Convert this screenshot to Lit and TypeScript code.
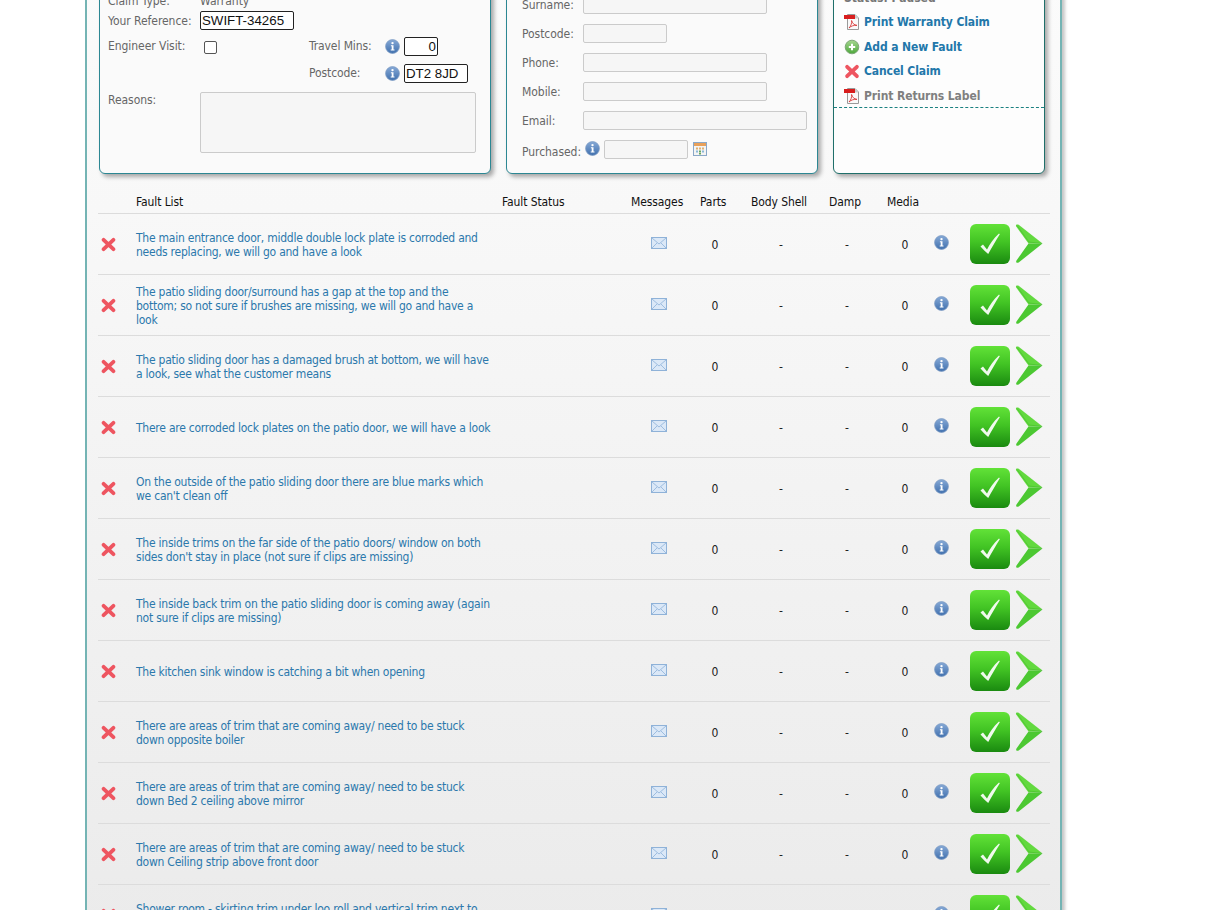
import { LitElement, css, html, svg } from 'lit'
import { customElement } from 'lit/decorators.js'

const FAULTS = [
  ['The main entrance door, middle double lock plate is corroded and', 'needs replacing, we will go and have a look'],
  ['The patio sliding door/surround has a gap at the top and the', 'bottom; so not sure if brushes are missing, we will go and have a', 'look'],
  ['The patio sliding door has a damaged brush at bottom, we will have', 'a look, see what the customer means'],
  ['There are corroded lock plates on the patio door, we will have a look'],
  ['On the outside of the patio sliding door there are blue marks which', "we can't clean off"],
  ['The inside trims on the far side of the patio doors/ window on both', "sides don't stay in place (not sure if clips are missing)"],
  ['The inside back trim on the patio sliding door is coming away (again', 'not sure if clips are missing)'],
  ['The kitchen sink window is catching a bit when opening'],
  ['There are areas of trim that are coming away/ need to be stuck', 'down opposite boiler'],
  ['There are areas of trim that are coming away/ need to be stuck', 'down Bed 2 ceiling above mirror'],
  ['There are areas of trim that are coming away/ need to be stuck', 'down Ceiling strip above front door'],
  ['Shower room - skirting trim under loo roll and vertical trim next to', 'shower'],
]

const infoIcon = () => svg`<svg class="info" viewBox="0 0 15 15" width="15" height="15">
  <defs><linearGradient id="ib" x1="0" y1="0" x2="0" y2="1"><stop offset="0" stop-color="#86a9d6"/><stop offset="1" stop-color="#4070ae"/></linearGradient></defs>
  <circle cx="7.5" cy="7.5" r="6.9" fill="url(#ib)" stroke="#7d9cc4" stroke-width=".8"/>
  <circle cx="7.5" cy="4.1" r="1.2" fill="#fff"/>
  <path d="M5.9 6.2h2.6v4.2h1v1.1H5.7v-1.1h1V7.3h-.8z" fill="#fff"/>
</svg>`

const crossIcon = () => svg`<svg viewBox="0 0 15 15" width="15" height="15">
  <path d="M2.6 2.8 12.4 12.2M12.4 2.8 2.6 12.2" stroke="#ee5560" stroke-width="3.8" stroke-linecap="round" fill="none"/>
</svg>`

const mailIcon = () => svg`<svg viewBox="0 0 16 12" width="16" height="12">
  <rect x=".5" y=".5" width="15" height="11" fill="#dbe8f7" stroke="#8fb2d8"/>
  <path d="M1 1l7 6 7-6M1 11l5-5M15 11l-5-5" fill="none" stroke="#9dbde0"/>
</svg>`

const pdfIcon = () => svg`<svg viewBox="0 0 16 16" width="16" height="16">
  <path d="M3.5 .5H11l3.5 3.5v11.5h-11z" fill="#fafafa" stroke="#9a9a9a"/>
  <path d="M0 1h11v4H0z" fill="#d81e1e"/>
  <path d="M11 1l3.5 3.5H11z" fill="#c9c9c9"/>
  <path d="M5 14c2-2 3-5 2.6-7.5C8.2 9 10 11 13 11.400 10 11 7 12 5 14z" fill="none" stroke="#d83a3a" stroke-width=".9"/>
</svg>`

const plusIcon = () => svg`<svg viewBox="0 0 16 16" width="16" height="16">
  <defs><linearGradient id="pg" x1="0" y1="0" x2="0" y2="1"><stop offset="0" stop-color="#a5d68f"/><stop offset="1" stop-color="#4ea83c"/></linearGradient></defs>
  <circle cx="8" cy="8" r="6.800" fill="url(#pg)" stroke="#7fa878"/>
  <path d="M8 4.800v6.400M4.800 8h6.400" stroke="#fff" stroke-width="2"/>
</svg>`

const calendarIcon = () => svg`<svg viewBox="0 0 14 14" width="14" height="14">
  <rect x=".5" y=".5" width="13" height="13" fill="#f4f4f4" stroke="#8aa8c8"/>
  <rect x="1" y="1" width="12" height="3" fill="#e8a05a"/>
  <path d="M3 5.500h2v2H3zM6 5.500h2v2H6zM9 5.500h2v2H9z" fill="#e0b070"/>
  <path d="M3 8.500h2v2H3zM9 8.500h2v2H9z" fill="#8ab8d8"/>
  <path d="M6 8.500h2v2H6zM6 11h2v1.500H6z" fill="#6aa860"/>
</svg>`

const arrowIcon = () => svg`<svg viewBox="0 0 28 40" width="28" height="40">
  <path d="M2.300 .5C1 .5.600 1.500 1.200 2.500L13.500 19.500H27.500L4 1C3.400.6 2.900.5 2.300.5z" fill="#62d93e"/>
  <path d="M13.500 19.500 1.500 36.500C.7 37.800 1.300 39 2.700 38.800 3.500 38.700 4 38.300 4.600 37.800L27.500 19.500z" fill="#4cc832"/>
  <path d="M2 1.500 14 18 27 19.500" fill="none" stroke="#3fb02a" stroke-width=".8" stroke-opacity=".6"/>
</svg>`

const tickIcon = () => svg`<svg viewBox="0 0 40 40" width="40" height="40">
  <path d="M10.500 22.500 13 20.500 17 25.500C20 19.500 23.500 14.500 29 9.500L29.800 10.300C25.500 17 22 23.500 18.200 30 15.500 28 13 25 10.500 22.500z" fill="#fff" fill-opacity=".92"/>
</svg>`

@customElement('app-root')
export class AppRoot extends LitElement {
  static styles = css`
    :host {
      display: block;
      height: 910px;
      overflow: hidden;
      background: #fff;
      font-family: 'DejaVu Sans', sans-serif;
      font-stretch: condensed;
      font-size: 12px;
      color: #666;
    }

    .panel {
      box-sizing: border-box;
      width: 977px;
      height: 960px;
      margin: -30px 0 0 85px;
      padding: 10px 0 0 12px;
      border: solid #74b4b4;
      border-width: 0 2px;
      background: linear-gradient(#fbfbfb, #f8f8f8 25%, #ebebeb 100%);
      box-shadow: 3px 0 3px #c8c8c8;
    }

    .cards {
      display: flex;
      gap: 15px;
      height: 194px;
    }

    .card {
      box-sizing: border-box;
      height: 194px;
      border: 1px solid #2c8793;
      border-radius: 6px;
      background: #fafafa;
      box-shadow: 3px 3px 4px #a9a9a9;
    }

    .claim {
      width: 392px;
      padding: 12px 0 0 8px;
    }

    .customer {
      width: 312px;
      padding: 0 0 0 15px;
    }

    .actions {
      width: 212px;
      border-color: #1f6f6a;
      background: #fdfdfd;
    }

    .line {
      display: flex;
      align-items: center;
    }

    .l1 {
      width: 92px;
      flex: none;
      letter-spacing: -0.05px;
    }

    .l2 {
      width: 76px;
      flex: none;
      letter-spacing: -0.1px;
    }

    .input {
      box-sizing: border-box;
      height: 19px;
      border: 1px solid #222;
      border-radius: 2px;
      background: #fff;
      color: #111;
      font: 13.3px/17px 'Liberation Sans', sans-serif;
      padding: 0 1px;
    }

    .input.num {
      text-align: right;
    }

    .off {
      box-sizing: border-box;
      height: 19px;
      border: 1px solid #cbcbcb;
      border-radius: 2px;
      background: #f6f6f6;
    }

    .claim-type {
      height: 15px;
      margin-bottom: 3px;
    }

    .ref {
      height: 19px;
      margin-bottom: 7px;
    }

    .visit {
      height: 19px;
      margin-bottom: 8px;
    }

    .visit > span:first-child,
    .mins {
      margin-top: -2px;
    }

    .pc {
      height: 19px;
      margin-bottom: 9px;
      padding-left: 201px;
    }

    .pc .l2 {
      margin-top: -2px;
    }

    .check {
      box-sizing: border-box;
      width: 13px;
      height: 13px;
      margin: 2px 0 0 4px;
      border: 1px solid #555;
      border-radius: 2px;
      background: #fff;
      flex: none;
    }

    .visit .mins {
      margin-left: 92px;
      width: 76px;
      flex: none;
      letter-spacing: -0.1px;
    }

    .visit .info,
    .pc .info {
      margin-right: 4px;
      flex: none;
    }

    .reasons {
      align-items: flex-start;
    }

    .reasons .off {
      width: 276px;
      height: 61px;
    }

    .reasons .l1 {
      margin-top: 1px;
    }

    .field {
      display: flex;
      align-items: center;
      height: 19px;
      margin-bottom: 10px;
    }

    .field .name {
      width: 61px;
      flex: none;
      letter-spacing: -0.05px;
    }

    .customer .field:first-child {
      margin-top: 14px;
    }

    .purchased {
      margin: 0;
    }

    .purchased .name {
      width: auto;
      margin: 4px 4px 0 0;
    }

    .purchased .off {
      margin: 0 5px 0 4px;
    }

    .purchased .info {
      margin-bottom: 2px;
    }

    .purchased svg:last-child {
      margin-bottom: 1px;
    }

    .status {
      padding: 10px 0 0 10px;
      height: 15px;
      font-weight: 700;
      color: #777;
    }

    .links {
      display: flex;
      flex-direction: column;
      height: 102px;
      padding: 4px 0 0 10px;
      box-sizing: border-box;
      border-bottom: 1px dashed #1a8080;
    }

    .link {
      display: flex;
      align-items: center;
      gap: 4px;
      height: 24.500px;
      font-weight: 700;
      letter-spacing: -0.1px;
      color: #2277aa;
      flex: none;
    }

    .link svg {
      width: 16px;
    }

    .link.grey {
      color: #808080;
    }

    .table {
      width: 952px;
      margin: 15px 0 0 -1px;
    }

    .row {
      display: grid;
      grid-template-columns: 38px 366px 128px 56px 58px 74px 58px 58px 16px 1fr;
      align-items: center;
      height: 61px;
      border-top: 1px solid #dcdcdc;
      box-sizing: border-box;
      color: #222;
    }

    .head {
      height: 24px;
      border: 0;
      padding-top: 2px;
      color: #111;
      letter-spacing: -0.1px;
    }

    .text {
      color: #2b78ac;
      line-height: 14px;
      letter-spacing: -0.24px;
      white-space: nowrap;
      padding-top: 2px;
    }

    .c {
      text-align: center;
      padding-top: 2px;
    }

    .cross {
      display: flex;
      padding-left: 3px;
    }

    .mail {
      display: flex;
      justify-content: center;
      padding: 0 0 2px 1px;
    }

    .icons {
      display: flex;
      gap: 5px;
      padding-left: 20px;
    }

    .tick {
      width: 40px;
      height: 40px;
      border-radius: 6px;
      background: linear-gradient(#62e238, #42c424 45%, #1a8a10);
    }

    .info-cell {
      display: flex;
      margin-bottom: 4px;
    }

    svg {
      display: block;
    }

    .h-msg { padding-left: 1px; }
    .h-parts { padding-left: 14px; }
    .h-body { padding-left: 7px; }
    .h-damp { padding-left: 11px; }
    .h-media { padding-left: 11px; }
  `

  private claimCard() {
    return html`
      <div class="card claim">
        <div class="line claim-type"><span class="l1">Claim Type:</span><span>Warranty</span></div>
        <div class="line ref"><span class="l1">Your Reference:</span><div class="input" style="width:94px">SWIFT-34265</div></div>
        <div class="line visit">
          <span class="l1">Engineer Visit:</span><span class="check"></span>
          <span class="mins">Travel Mins:</span>${infoIcon()}<div class="input num" style="width:34px">0</div>
        </div>
        <div class="line pc"><span class="l2">Postcode:</span>${infoIcon()}<div class="input" style="width:64px">DT2 8JD</div></div>
        <div class="line reasons"><span class="l1">Reasons:</span><div class="off"></div></div>
      </div>
    `
  }

  private customerCard() {
    const rows: [string, number][] = [['Surname:', 184], ['Postcode:', 84], ['Phone:', 184], ['Mobile:', 184], ['Email:', 224]]
    return html`
      <div class="card customer">
        ${rows.map(([name, w]) => html`<div class="field"><span class="name">${name}</span><div class="off" style="width:${w}px"></div></div>`)}
        <div class="field purchased">
          <span class="name">Purchased:</span>${infoIcon()}<div class="off" style="width:84px"></div>${calendarIcon()}
        </div>
      </div>
    `
  }

  private actionsCard() {
    return html`
      <div class="card actions">
        <div class="status">Status: Paused</div>
        <div class="links">
          <div class="link">${pdfIcon()}Print Warranty Claim</div>
          <div class="link">${plusIcon()}Add a New Fault</div>
          <div class="link">${crossIcon()}Cancel Claim</div>
          <div class="link grey">${pdfIcon()}Print Returns Label</div>
        </div>
      </div>
    `
  }

  private faultRow(lines: string[]) {
    return html`
      <div class="row">
        <div class="cross">${crossIcon()}</div>
        <div class="text">${lines.map((l, i) => html`${i ? html`<br />` : ''}${l}`)}</div>
        <div></div>
        <div class="mail">${mailIcon()}</div>
        <div class="c">0</div>
        <div class="c">-</div>
        <div class="c">-</div>
        <div class="c">0</div>
        <div class="info-cell">${infoIcon()}</div>
        <div class="icons"><div class="tick">${tickIcon()}</div>${arrowIcon()}</div>
      </div>
    `
  }

  render() {
    return html`
      <div class="panel">
        <div class="cards">${this.claimCard()}${this.customerCard()}${this.actionsCard()}</div>
        <div class="table">
          <div class="row head">
            <div></div>
            <div>Fault List</div>
            <div>Fault Status</div>
            <div class="h-msg">Messages</div>
            <div class="h-parts">Parts</div>
            <div class="h-body">Body Shell</div>
            <div class="h-damp">Damp</div>
            <div class="h-media">Media</div>
            <div></div>
            <div></div>
          </div>
          ${FAULTS.map((f) => this.faultRow(f))}
        </div>
      </div>
    `
  }
}
